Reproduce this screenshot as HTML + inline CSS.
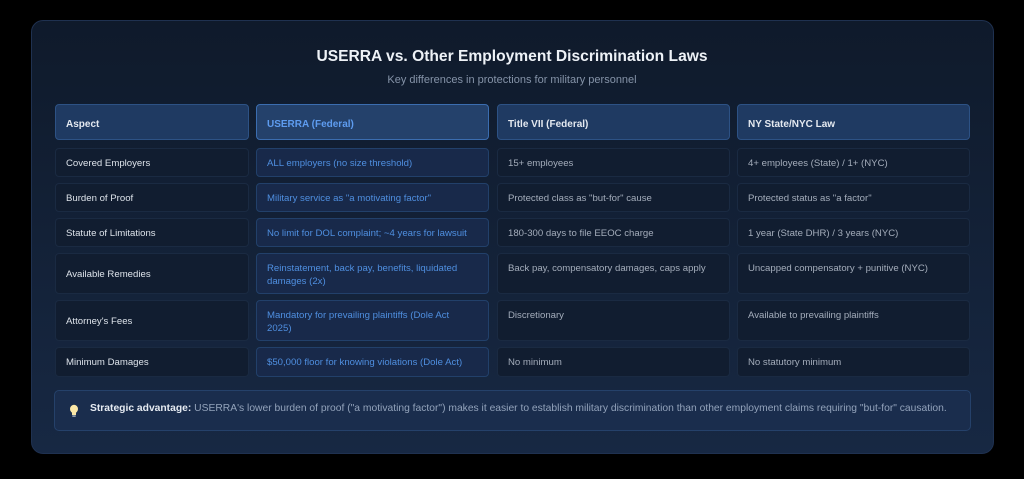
<!DOCTYPE html><html><head><style>
*{margin:0;padding:0;box-sizing:border-box}
body{width:1024px;height:479px;background:#000;font-family:"Liberation Sans",sans-serif;position:relative;overflow:hidden}
.card{position:absolute;left:31px;top:20px;width:963px;height:434px;border-radius:12px;background:linear-gradient(#0f1a2b,#172843);border:1px solid #1f3150}
h1{position:absolute;left:0;width:1024px;top:48px;text-align:center;color:#eef2f7;font-size:15.6px;font-weight:bold}
.sub{position:absolute;left:0;width:1024px;top:74px;text-align:center;color:#8593a8;font-size:11px}
.c{position:absolute;border-radius:4px;font-size:9.6px;line-height:13px;padding:8px 10px 0 10px;border:1px solid #1a2a42;background:#111d30;color:#a4adbb}
.a{color:#dde3ea}
.u{background:#18294a;border-color:#22406a;color:#4f8fe0}
.h{background:#1f3a62;border-color:#2d5285;color:#e4e9f0;font-weight:bold;font-size:10px;padding-top:13px}
.hu{background:#24416b;border-color:#3b6db0;color:#5e9cf0}
.call{position:absolute;left:54px;top:390px;width:917px;height:41px;border-radius:5px;background:#1a2d4d;border:1px solid #25416a;font-size:10.3px;color:#93a3bb;padding:12px 0 0 35px}
.call b{color:#e6ebf2}
</style></head><body>
<div class="card"></div>
<h1>USERRA vs. Other Employment Discrimination Laws</h1>
<div class="sub">Key differences in protections for military personnel</div>

<div class="c h" style="left:55px;top:104px;width:194px;height:36px">Aspect</div>
<div class="c h hu" style="left:256px;top:104px;width:233px;height:36px">USERRA (Federal)</div>
<div class="c h" style="left:497px;top:104px;width:233px;height:36px">Title VII (Federal)</div>
<div class="c h" style="left:737px;top:104px;width:233px;height:36px">NY State/NYC Law</div>

<div class="c a" style="left:55px;top:148px;width:194px;height:29px">Covered Employers</div>
<div class="c u" style="left:256px;top:148px;width:233px;height:29px">ALL employers (no size threshold)</div>
<div class="c" style="left:497px;top:148px;width:233px;height:29px">15+ employees</div>
<div class="c" style="left:737px;top:148px;width:233px;height:29px">4+ employees (State) / 1+ (NYC)</div>

<div class="c a" style="left:55px;top:183px;width:194px;height:29px">Burden of Proof</div>
<div class="c u" style="left:256px;top:183px;width:233px;height:29px">Military service as "a motivating factor"</div>
<div class="c" style="left:497px;top:183px;width:233px;height:29px">Protected class as "but-for" cause</div>
<div class="c" style="left:737px;top:183px;width:233px;height:29px">Protected status as "a factor"</div>

<div class="c a" style="left:55px;top:218px;width:194px;height:29px">Statute of Limitations</div>
<div class="c u" style="left:256px;top:218px;width:233px;height:29px">No limit for DOL complaint; ~4 years for lawsuit</div>
<div class="c" style="left:497px;top:218px;width:233px;height:29px">180-300 days to file EEOC charge</div>
<div class="c" style="left:737px;top:218px;width:233px;height:29px">1 year (State DHR) / 3 years (NYC)</div>

<div class="c a" style="left:55px;top:253px;width:194px;height:41px;padding-top:14px">Available Remedies</div>
<div class="c u" style="left:256px;top:253px;width:233px;height:41px">Reinstatement, back pay, benefits, liquidated damages (2x)</div>
<div class="c" style="left:497px;top:253px;width:233px;height:41px">Back pay, compensatory damages, caps apply</div>
<div class="c" style="left:737px;top:253px;width:233px;height:41px">Uncapped compensatory + punitive (NYC)</div>

<div class="c a" style="left:55px;top:300px;width:194px;height:41px;padding-top:14px">Attorney's Fees</div>
<div class="c u" style="left:256px;top:300px;width:233px;height:41px">Mandatory for prevailing plaintiffs (Dole Act<br>2025)</div>
<div class="c" style="left:497px;top:300px;width:233px;height:41px">Discretionary</div>
<div class="c" style="left:737px;top:300px;width:233px;height:41px">Available to prevailing plaintiffs</div>

<div class="c a" style="left:55px;top:347px;width:194px;height:30px">Minimum Damages</div>
<div class="c u" style="left:256px;top:347px;width:233px;height:30px">$50,000 floor for knowing violations (Dole Act)</div>
<div class="c" style="left:497px;top:347px;width:233px;height:30px">No minimum</div>
<div class="c" style="left:737px;top:347px;width:233px;height:30px">No statutory minimum</div>

<div class="call"><svg style="position:absolute;left:14px;top:13px" width="10" height="14" viewBox="0 0 10 14"><ellipse cx="5" cy="5" rx="4" ry="4.3" fill="#fbe7a6"/><rect x="3" y="8" width="4" height="3" fill="#fbe7a6"/><rect x="3.3" y="11.3" width="3.4" height="1.6" fill="#9aa4b2"/></svg><b>Strategic advantage:</b> USERRA's lower burden of proof ("a motivating factor") makes it easier to establish military discrimination than other employment claims requiring "but-for" causation.</div>
</body></html>
